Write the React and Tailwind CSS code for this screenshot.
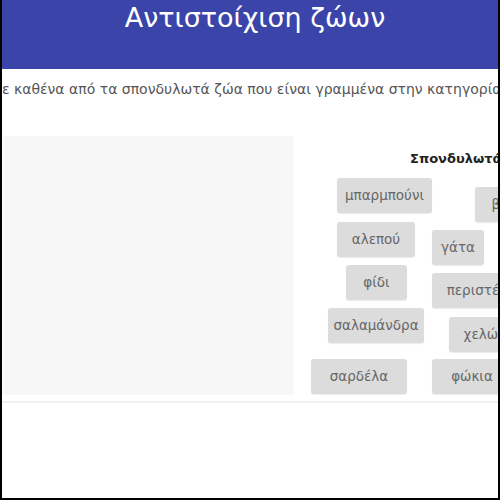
const pool = [
  { label: "μπαρμπούνι", x: 37, y: 42, w: 95 },
  { label: "βάτραχος", x: 175, y: 51, w: 100 },
  { label: "αλεπού", x: 37, y: 86, w: 78 },
  { label: "γάτα", x: 132, y: 94, w: 52 },
  { label: "φίδι", x: 46, y: 129, w: 61 },
  { label: "περιστέρι", x: 132, y: 137, w: 95 },
  { label: "σαλαμάνδρα", x: 28, y: 172, w: 96 },
  { label: "χελώνα", x: 149, y: 181, w: 80 },
  { label: "σαρδέλα", x: 11, y: 223, w: 96 },
  { label: "φώκια", x: 132, y: 223, w: 80 },
];

function App() {
  return (
    <div
      className="w-[500px] h-[500px] overflow-hidden bg-white border-x-2 border-b-2 border-black"
      style={{ fontFamily: '"DejaVu Sans", "Noto Sans", sans-serif' }}
    >
      <header className="h-[69px] bg-[#3b45a9] flex justify-center">
        <h1 className="text-white text-[27px] leading-none pt-[4px] pl-[10px]">
          Αντιστοίχιση ζώων
        </h1>
      </header>

      <div className="h-[36px] overflow-hidden whitespace-nowrap pt-[10px]">
        <p className="ml-[-9px] text-[14px] text-[#555]">
          με καθένα από τα σπονδυλωτά ζώα που είναι γραμμένα στην κατηγορία
        </p>
      </div>

      <div className="flex mt-[31px]">
        <div className="w-[290px] h-[259px] ml-px bg-[#f7f7f7]" />
        <div className="flex-1 ml-[7px] relative h-[259px] overflow-hidden">
          <h2 className="absolute left-[110px] top-[13px] whitespace-nowrap text-[13px] font-bold text-[#222]">
            Σπονδυλωτά
          </h2>
          {pool.map((item) => (
            <div
              key={item.label}
              className="absolute h-[35px] flex items-center justify-center rounded-[3px] bg-[#dcdcdc] text-[13.5px] text-[#666] whitespace-nowrap shadow-[0_1px_1px_rgba(0,0,0,0.08)]"
              style={{ left: item.x, top: item.y, width: item.w }}
            >
              {item.label}
            </div>
          ))}
        </div>
      </div>

      <div className="mt-[6px] h-[2px] bg-[#f2f2f2]" />
    </div>
  );
}

export default App;
